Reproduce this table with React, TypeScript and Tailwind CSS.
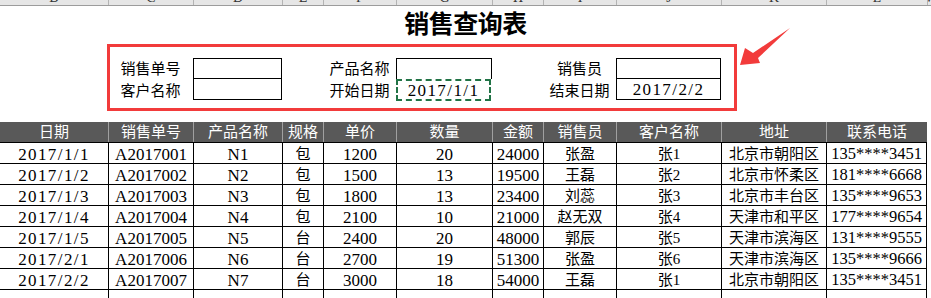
import React from 'react';

const letters = ['B', 'C', 'D', 'E', 'F', 'G', 'H', 'I', 'J', 'K', 'L', 'M'];

const heads = ['日期', '销售单号', '产品名称', '规格', '单价', '数量', '金额', '销售员', '客户名称', '地址', '联系电话'];

const rows = [
  ['2017/1/1', 'A2017001', 'N1', '包', '1200', '20', '24000', '张盈', '张1', '北京市朝阳区', '135****3451'],
  ['2017/1/2', 'A2017002', 'N2', '包', '1500', '13', '19500', '王磊', '张2', '北京市怀柔区', '181****6668'],
  ['2017/1/3', 'A2017003', 'N3', '包', '1800', '13', '23400', '刘蕊', '张3', '北京市丰台区', '135****9653'],
  ['2017/1/4', 'A2017004', 'N4', '包', '2100', '10', '21000', '赵无双', '张4', '天津市和平区', '177****9654'],
  ['2017/1/5', 'A2017005', 'N5', '台', '2400', '20', '48000', '郭辰', '张5', '天津市滨海区', '131****9555'],
  ['2017/2/1', 'A2017006', 'N6', '台', '2700', '19', '51300', '张盈', '张6', '天津市滨海区', '135****9666'],
  ['2017/2/2', 'A2017007', 'N7', '台', '3000', '18', '54000', '王磊', '张1', '北京市朝阳区', '135****3451'],
  ['', '', '', '', '', '', '', '', '', '', ''],
];

// per column text style
const colText = [
  'text-[17px] tracking-[1.4px]',
  'text-[17px]',
  'text-[17px]',
  'text-[15px]',
  'text-[17px]',
  'text-[17px]',
  'text-[17px]',
  'text-[15px]',
  'text-[15px]',
  'text-[15px]',
  'text-[16.5px]',
];

const grid = 'grid grid-cols-[108px_85px_89px_41px_73px_96px_51px_73px_105px_105px_101px_1fr]';
const font = "font-['Liberation_Serif','Noto_Sans_CJK_SC',serif]";

function Label({ children }: { children: React.ReactNode }) {
  return <div className="flex items-center justify-center text-[15px] leading-none pt-[2px]">{children}</div>;
}

export default function App() {
  return (
    <div className={`relative w-[931px] h-[298px] overflow-hidden bg-white text-black ${font}`}>
      {/* column letters strip */}
      <div className={`${grid} h-[6px] bg-[#e6e6e6] border-b border-[#9c9c9c] overflow-hidden`}>
        {letters.map((l, i) => (
          <div
            key={l}
            className={`flex items-end justify-center overflow-hidden text-[14px] leading-[14px] text-[#333] ${i > 0 ? 'border-l border-[#b4b4b4]' : ''}`}
          >
            <span>{l}</span>
          </div>
        ))}
      </div>

      {/* title */}
      <div className="h-[31px] flex items-center justify-center pt-[1px]">
        <span className="text-[25px] font-bold leading-none tracking-[-0.5px] font-['Noto_Sans_CJK_SC',sans-serif]">销售查询表</span>
      </div>
      <div className="h-[21px]" />

      {/* query form */}
      <div className={`${grid} h-[21px]`}>
        <div />
        <Label>销售单号</Label>
        <div className="border border-black" />
        <div />
        <Label>产品名称</Label>
        <div className="border border-b-0 border-black" />
        <div />
        <Label>销售员</Label>
        <div className="border border-black" />
      </div>
      <div className={`${grid} h-[22px]`}>
        <div />
        <Label>客户名称</Label>
        <div className="border border-t-0 border-black h-[21px]" />
        <div />
        <Label>开始日期</Label>
        <div className="border-2 border-dashed border-[#217346] mr-[1px] flex items-center justify-center text-[17px] tracking-[1.4px] leading-none pt-[1px]">
          2017/1/1
        </div>
        <div />
        <Label>结束日期</Label>
        <div className="border border-t-0 border-black h-[21px] flex items-center justify-center text-[17px] tracking-[1.4px] leading-none pt-[1px]">
          2017/2/2
        </div>
      </div>
      <div className="h-[20px]" />

      {/* table */}
      <div className={`${grid} h-[21px] border-t border-white`}>
        {heads.map((h, i) => (
          <div
            key={h}
            className={`bg-[#595959] text-white flex items-center justify-center text-[15px] leading-none pt-[1px] ${i > 0 ? 'border-l border-[#a0a0a0]' : ''}`}
          >
            {h}
          </div>
        ))}
      </div>
      {rows.map((r, ri) => (
        <div key={ri} className={`${grid} h-[21px]`}>
          {r.map((c, ci) => (
            <div
              key={ci}
              className={`border-t border-black flex items-center justify-center leading-none pt-[2px] ${colText[ci]} ${ci > 0 ? 'border-l' : ''} ${ci === 10 ? 'border-r' : ''}`}
            >
              {c}
            </div>
          ))}
        </div>
      ))}

      {/* drawn shapes over the sheet */}
      <div className="absolute left-[107px] top-[44px] w-[630px] h-[67px] border-[3px] border-[#f23b3b] pointer-events-none" />
      <svg className="absolute left-[735px] top-[24px]" width="60" height="46" viewBox="0 0 60 46">
        <polygon points="5,41 10,24 18,29 55,4 23,34 25,39" fill="#f23b3b" />
      </svg>
    </div>
  );
}
